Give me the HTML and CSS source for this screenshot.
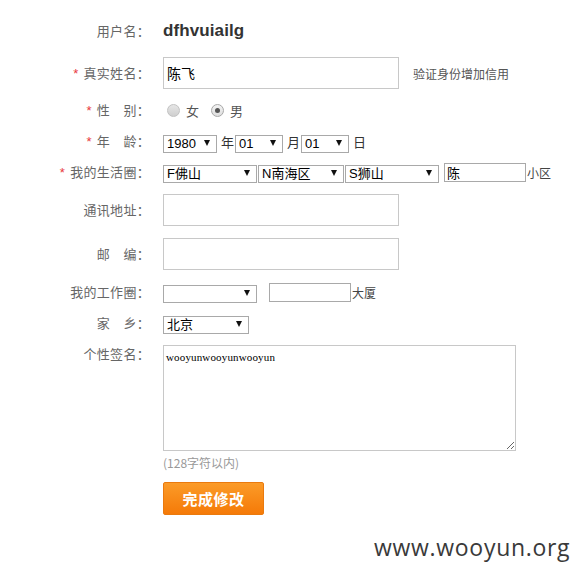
FILE: index.html
```html
<!DOCTYPE html>
<html lang="zh-CN">
<head>
<meta charset="utf-8">
<title>个人资料</title>
<link rel="stylesheet" href="styles.css">
</head>
<body>
<form class="form">
  <div class="row r-user">
    <label class="lbl">用户名：</label>
    <div class="val"><span class="username">dfhvuiailg</span></div>
  </div>
  <div class="row r-big">
    <label class="lbl"><i class="req">*</i>真实姓名：</label>
    <div class="val"><input class="txt wide" type="text" value="陈飞"><span class="note">验证身份增加信用</span></div>
  </div>
  <div class="row r-radio">
    <label class="lbl"><i class="req">*</i>性　别：</label>
    <div class="val">
      <span class="radio"></span><span class="rtext">女</span>
      <span class="radio on"></span><span class="rtext">男</span>
    </div>
  </div>
  <div class="row r-sel">
    <label class="lbl"><i class="req">*</i>年　龄：</label>
    <div class="val">
      <span class="sel w54"><select><option>1980</option></select></span><span class="unit">年</span>
      <span class="sel w48"><select><option>01</option></select></span><span class="unit">月</span>
      <span class="sel w48"><select><option>01</option></select></span><span class="unit">日</span>
    </div>
  </div>
  <div class="row r-sel2">
    <label class="lbl"><i class="req">*</i>我的生活圈：</label>
    <div class="val">
      <span class="sel w94"><select><option>F佛山</option></select></span>
      <span class="sel w86 tight"><select><option>N南海区</option></select></span>
      <span class="sel w94 tight"><select><option>S狮山</option></select></span>
      <input class="txt small ml5" type="text" value="陈"><span class="suffix">小区</span>
    </div>
  </div>
  <div class="row r-big">
    <label class="lbl">通讯地址：</label>
    <div class="val"><input class="txt wide" type="text"></div>
  </div>
  <div class="row r-big">
    <label class="lbl">邮　编：</label>
    <div class="val"><input class="txt wide" type="text"></div>
  </div>
  <div class="row r-sel2">
    <label class="lbl">我的工作圈：</label>
    <div class="val">
      <span class="sel w94"><select><option></option></select></span>
      <input class="txt small ml12" type="text"><span class="suffix">大厦</span>
    </div>
  </div>
  <div class="row r-sel">
    <label class="lbl">家　乡：</label>
    <div class="val"><span class="sel w86"><select><option>北京</option></select></span></div>
  </div>
  <div class="row r-area">
    <label class="lbl">个性签名：</label>
    <div class="val col">
      <textarea class="area">wooyunwooyunwooyun</textarea>
      <span class="hint">(128字符以内)</span>
      <button type="button" class="btn">完成修改</button>
    </div>
  </div>
</form>
<div class="watermark">www.wooyun.org</div>
</body>
</html>
```

FILE: styles.css
```css
* { box-sizing: border-box; }
html, body { margin: 0; padding: 0; background: #fff; }
body {
  width: 580px;
  height: 576px;
  position: relative;
  font-family: "Noto Sans CJK SC", "Liberation Sans", sans-serif;
  font-size: 13px;
  color: #666;
  overflow: hidden;
}
.form {
  display: flex;
  flex-direction: column;
  gap: 12px;
  padding-top: 16px;
}
.row {
  display: grid;
  grid-template-columns: 150px 1fr;
  column-gap: 13px;
  align-items: center;
}
.r-user { height: 29px; }
.r-big { height: 32px; }
.r-radio { height: 19px; }
.r-sel { height: 18px; }
.r-sel2 { height: 20px; }
.r-area { align-items: start; }
.lbl {
  text-align: right;
  color: #666;
  font-size: 13px;
  line-height: 18px;
  white-space: nowrap;
  letter-spacing: 0.3px;
}
.r-area .lbl { margin-top: 1px; }
.req {
  font-style: normal;
  color: #e8383d;
  margin-right: 5px;
  font-family: "Liberation Sans", sans-serif;
}
.val {
  display: flex;
  align-items: center;
  height: 100%;
}
.val.col {
  flex-direction: column;
  align-items: flex-start;
  height: auto;
}
.username {
  font-family: "Liberation Sans", "Noto Sans CJK SC", sans-serif;
  font-weight: bold;
  font-size: 17px;
  color: #333;
  letter-spacing: 0.1px;
  margin-top: 1px;
}
.txt {
  border: 1px solid #c8c8c8;
  background: #fff;
  font-family: "Noto Sans CJK SC", sans-serif;
  font-size: 14px;
  color: #000;
  padding: 0 3px;
  outline: none;
  margin: 0;
}
.txt.wide { width: 236px; height: 32px; }
.txt.small {
  width: 82px;
  height: 19px;
  border-color: #a9a9a9;
  font-size: 13px;
  padding: 0 2px;
}
.ml5 { margin-left: 5px; }
.ml12 { margin-left: 12px; }
.note {
  margin-left: 14px;
  font-size: 12px;
  color: #555;
}
.suffix { font-size: 12px; color: #444; margin-left: 1px; }
.radio {
  width: 13px;
  height: 13px;
  border-radius: 50%;
  border: 1px solid #c2c2c2;
  background: linear-gradient(#e6e6e6, #cfcfcf);
  position: relative;
  margin-left: 4px;
}
.radio.on {
  background: linear-gradient(#f2f2f2, #dedede);
  border-color: #a8a8a8;
  margin-left: 12px;
}
.radio.on::after {
  content: "";
  position: absolute;
  left: 3px;
  top: 3px;
  width: 5px;
  height: 5px;
  border-radius: 50%;
  background: #555;
}
.rtext { margin-left: 6px; color: #555; font-size: 13px; }
.sel {
  position: relative;
  display: inline-block;
  height: 18px;
}
.sel select {
  -webkit-appearance: none;
  appearance: none;
  width: 100%;
  height: 18px;
  border: 1px solid #a9a9a9;
  border-radius: 0;
  background: #fff;
  font-family: "Liberation Sans", "Noto Sans CJK SC", sans-serif;
  font-size: 13px;
  line-height: 16px;
  color: #000;
  padding: 0 0 0 3px;
  margin: 0;
  outline: none;
}
.sel::after {
  content: "";
  position: absolute;
  right: 7px;
  top: 7px;
  border-left: 3.5px solid transparent;
  border-right: 3.5px solid transparent;
  border-top: 6px solid #111;
  pointer-events: none;
}
.w54 { width: 54px; }
.w48 { width: 48px; }
.w94 { width: 94px; }
.w86 { width: 86px; }
.tight { margin-left: 1px; }
.unit {
  font-size: 13px;
  color: #333;
  margin: 0 1px 0 4px;
}
.area {
  width: 353px;
  height: 106px;
  border: 1px solid #c8c8c8;
  font-family: "Liberation Serif", serif;
  font-size: 11px;
  line-height: 14px;
  letter-spacing: 0.15px;
  color: #000;
  padding: 4px 2px;
  margin: 1px 0 0 0;
  outline: none;
  resize: both;
}
.hint {
  margin-top: 4px;
  font-size: 12px;
  color: #999;
  line-height: 16px;
}
.btn {
  margin-top: 11px;
  width: 101px;
  height: 33px;
  border: 1px solid #ea7a0e;
  border-radius: 2px;
  background: linear-gradient(#fb9b28, #f57a08);
  color: #fff;
  font-family: "Noto Sans CJK SC", sans-serif;
  font-weight: bold;
  font-size: 15px;
  letter-spacing: 0.5px;
  padding: 0;
}
.watermark {
  position: absolute;
  left: 374px;
  top: 532px;
  font-family: "Open Sans", "Noto Sans", sans-serif;
  font-size: 23px;
  color: #3a3a3a;
  letter-spacing: 0.7px;
  line-height: 30px;
}
```
